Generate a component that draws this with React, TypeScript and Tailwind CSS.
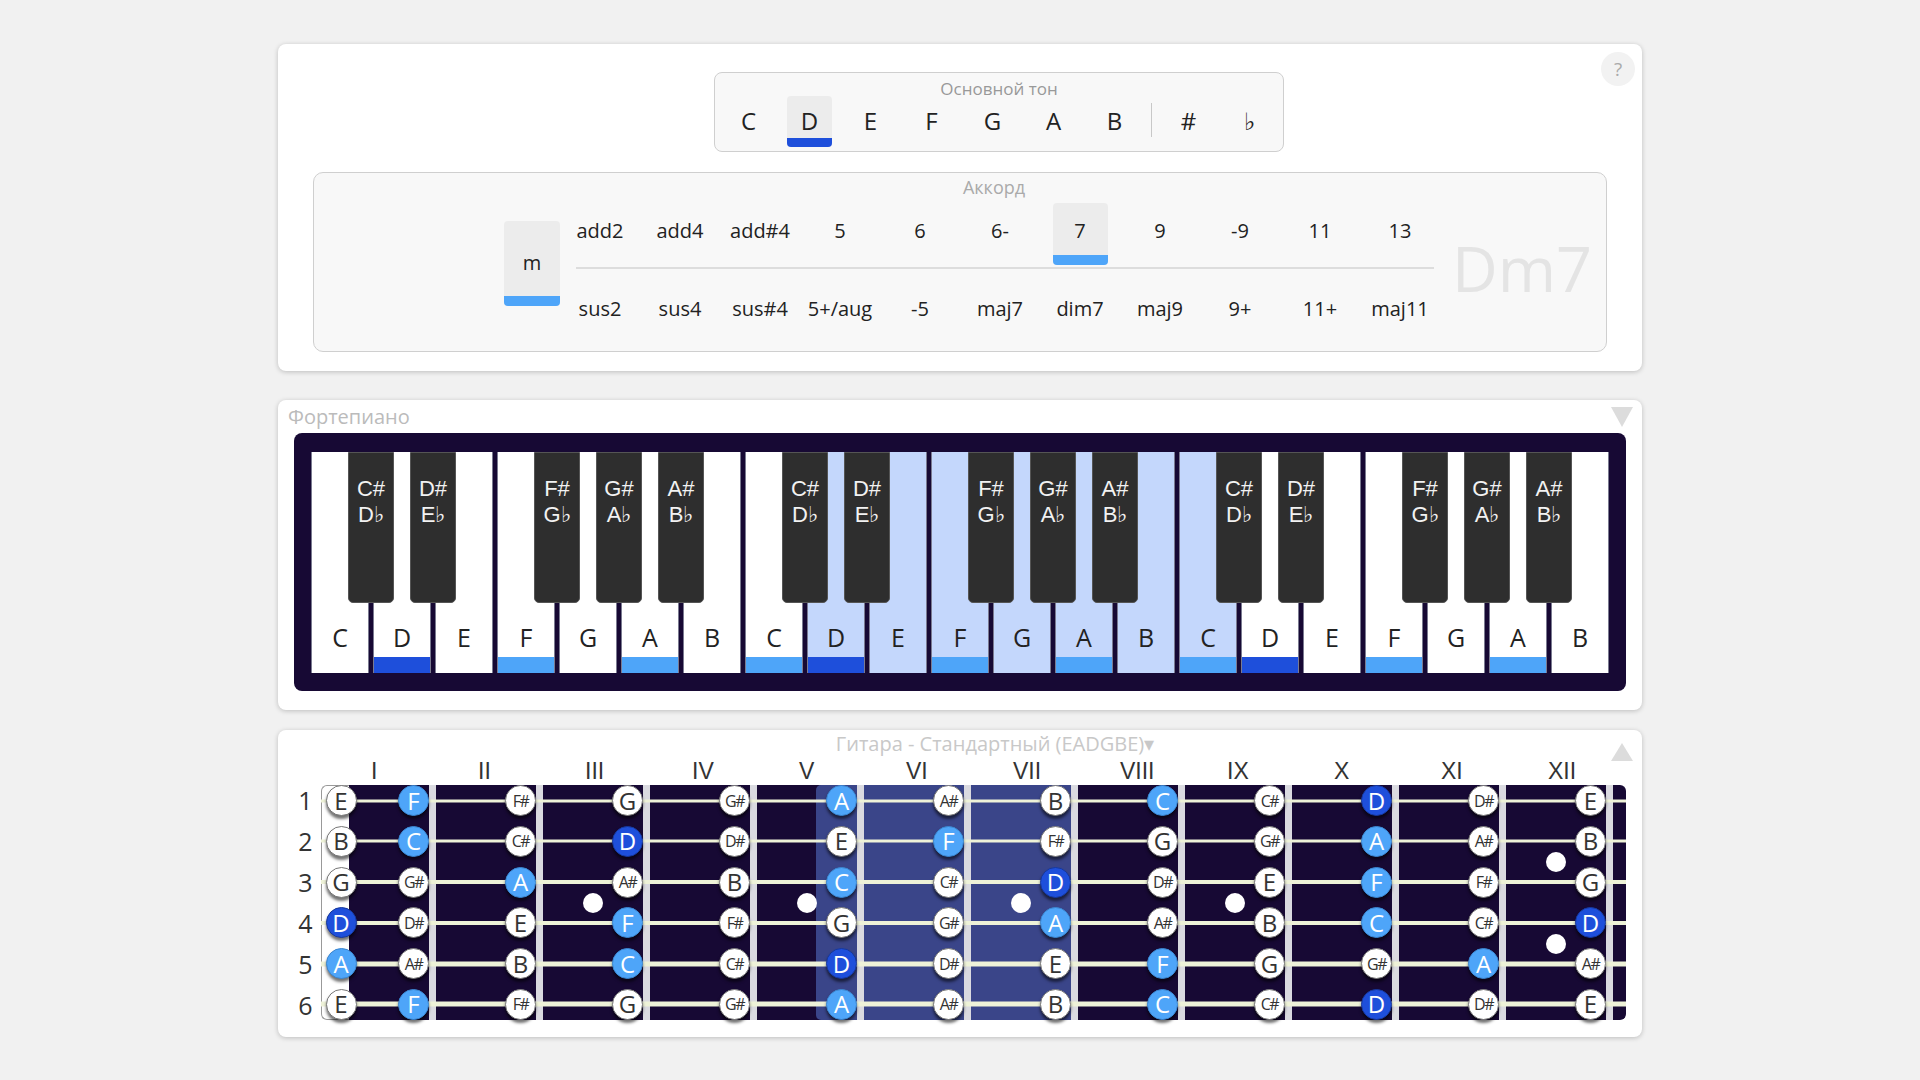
import React from 'react';

const ROOTS = ['C', 'D', 'E', 'F', 'G', 'A', 'B'];
const TOP_ROW = ['add2', 'add4', 'add#4', '5', '6', '6-', '7', '9', '-9', '11', '13'];
const BOTTOM_ROW = ['sus2', 'sus4', 'sus#4', '5+/aug', '-5', 'maj7', 'dim7', 'maj9', '9+', '11+', 'maj11'];

const WHITE_KEYS = [...ROOTS, ...ROOTS, ...ROOTS];
const KEY_BARS: Record<number, 'dark' | 'light'> = {
  1: 'dark', 3: 'light', 5: 'light',
  7: 'light', 8: 'dark', 10: 'light', 12: 'light',
  14: 'light', 15: 'dark', 17: 'light', 19: 'light',
};
const BLACK_KEYS: { after: number; top: string; bottom: string }[] = [];
[0, 1, 2].forEach((o) => {
  [
    [0, 'C#', 'D♭'],
    [1, 'D#', 'E♭'],
    [3, 'F#', 'G♭'],
    [4, 'G#', 'A♭'],
    [5, 'A#', 'B♭'],
  ].forEach(([i, t, b]) => BLACK_KEYS.push({ after: o * 7 + (i as number), top: t as string, bottom: b as string }));
});

const FRETS = ['I', 'II', 'III', 'IV', 'V', 'VI', 'VII', 'VIII', 'IX', 'X', 'XI', 'XII'];
const STRINGS = [
  ['E', 'F', 'F#', 'G', 'G#', 'A', 'A#', 'B', 'C', 'C#', 'D', 'D#', 'E'],
  ['B', 'C', 'C#', 'D', 'D#', 'E', 'F', 'F#', 'G', 'G#', 'A', 'A#', 'B'],
  ['G', 'G#', 'A', 'A#', 'B', 'C', 'C#', 'D', 'D#', 'E', 'F', 'F#', 'G'],
  ['D', 'D#', 'E', 'F', 'F#', 'G', 'G#', 'A', 'A#', 'B', 'C', 'C#', 'D'],
  ['A', 'A#', 'B', 'C', 'C#', 'D', 'D#', 'E', 'F', 'G', 'G#', 'A', 'A#'],
  ['E', 'F', 'F#', 'G', 'G#', 'A', 'A#', 'B', 'C', 'C#', 'D', 'D#', 'E'],
];
const STRING_H = ['h-[3px]', 'h-[3px]', 'h-[4px]', 'h-[4px]', 'h-[5px]', 'h-[5px]'];

function Note({ n }: { n: string }) {
  const root = n === 'D';
  const chord = n === 'F' || n === 'A' || n === 'C';
  const sharp = n.includes('#');
  const color = root
    ? 'bg-[#1e4fdb] text-white border-[#17389c]'
    : chord
      ? 'bg-[#4ea5f9] text-white border-[#3b86d0]'
      : 'bg-white text-[#333] border-[#777]';
  return (
    <div
      className={`w-[31px] h-[31px] rounded-full border flex items-center justify-center shadow-[0_3px_3px_rgba(0,0,0,0.55)] ${color}`}
    >
      <span className={sharp ? 'text-[16px] leading-none tracking-[-1.5px]' : 'text-[24px] leading-none'}>{n}</span>
    </div>
  );
}

function Triangle({ up }: { up?: boolean }) {
  return (
    <svg width="22" height="20" viewBox="0 0 22 20">
      <polygon points={up ? '11,0 22,18 0,18' : '0,0 22,0 11,20'} fill="#dcdcdc" />
    </svg>
  );
}

export default function App() {
  return (
    <div className="min-h-screen bg-[#f1f1f1] pt-[44px] pb-[43px] font-['Open_Sans',sans-serif] text-[#222]">
      {/* chord picker */}
      <div className="relative mx-auto w-[1364px] bg-white rounded-[8px] shadow-[0_1px_5px_rgba(0,0,0,0.22)] pt-[28px] pb-[19px] px-[35px]">
        <button className="absolute top-[8px] right-[7px] w-[34px] h-[34px] rounded-full bg-[#f2f2f2] text-[#aaa] text-[19px] leading-none flex items-center justify-center">
          ?
        </button>

        <div className="ml-[401px] w-[570px] h-[80px] border border-[#cfcfcf] rounded-[8px] bg-[#f8f8f8] flex flex-col items-center">
          <div className="pt-[7px] text-[17px] leading-[18px] text-[#999]">Основной тон</div>
          <div className="mt-[-2px] flex items-start">
            {ROOTS.map((r) => (
              <div
                key={r}
                className={`w-[45px] h-[51px] mr-[16px] last:mr-0 flex flex-col items-center rounded-[4px] overflow-hidden ${r === 'D' ? 'bg-[#ececec]' : ''}`}
              >
                <span className="mt-[10px] text-[24px] leading-[30px]">{r}</span>
                <span className="flex-1" />
                <span className={`w-full h-[9px] ${r === 'D' ? 'bg-[#1e4fdb]' : ''}`} />
              </div>
            ))}
            <div className="ml-[-2px] mr-[14px] mt-[7px] w-px h-[34px] bg-[#c8c8c8]" />
            {['#', '♭'].map((r) => (
              <div key={r} className="w-[45px] h-[51px] mr-[16px] last:mr-0 flex flex-col items-center">
                <span className="mt-[10px] text-[24px] leading-[30px]">{r}</span>
              </div>
            ))}
          </div>
        </div>

        <div className="mt-[20px] h-[180px] border border-[#cfcfcf] rounded-[10px] bg-[#f8f8f8]">
          <div className="pt-[5px] pl-[68px] text-center text-[18px] leading-[18px] text-[#aaa]">Аккорд</div>
          <div className="mt-[7px] ml-[190px] flex items-start">
            <div className="mt-[18px] w-[56px] h-[85px] rounded-[4px] overflow-hidden bg-[#ececec] flex flex-col items-center">
              <span className="mt-[28px] text-[20px] leading-[28px]">m</span>
              <span className="flex-1" />
              <span className="w-full h-[10px] bg-[#4ea5f9]" />
            </div>
            <div className="w-[880px] shrink-0">
              <div className="flex h-[62px]">
                {TOP_ROW.map((c) => (
                  <div key={c} className="w-[80px] shrink-0 flex justify-center">
                    <div
                      className={`w-[55px] h-[62px] rounded-[4px] flex flex-col items-center ${c === '7' ? 'bg-[#ececec]' : ''}`}
                    >
                      <span className="mt-[14px] text-[20px] leading-[28px] whitespace-nowrap">{c}</span>
                      <span className="flex-1" />
                      <span className={`w-full h-[10px] rounded-b-[4px] ${c === '7' ? 'bg-[#4ea5f9]' : ''}`} />
                    </div>
                  </div>
                ))}
              </div>
              <div className="mt-[2px] ml-[16px] w-[858px] h-[2px] bg-[#dddddd]" />
              <div className="mt-[2px] flex h-[62px]">
                {BOTTOM_ROW.map((c) => (
                  <div key={c} className="w-[80px] shrink-0 flex justify-center">
                    <span className="mt-[24px] text-[20px] leading-[28px] whitespace-nowrap">{c}</span>
                  </div>
                ))}
              </div>
            </div>
            <div className="ml-[12px] mt-[33px] text-[63px] leading-[64px] text-[#e4e4e4]">Dm7</div>
          </div>
        </div>
      </div>

      {/* piano */}
      <div className="relative mx-auto mt-[29px] w-[1364px] bg-white rounded-[8px] shadow-[0_1px_5px_rgba(0,0,0,0.22)] pt-[4px] pb-[19px] px-[16px]">
        <div className="absolute top-[7px] right-[9px]">
          <Triangle />
        </div>
        <div className="ml-[-6px] text-[20px] leading-[26px] text-[#bbb]">Фортепиано</div>
        <div className="mt-[3px] w-[1332px] h-[258px] bg-[#170934] rounded-[8px] pl-[17px] pt-[19px]">
          <div className="relative w-[1298px] h-[221px] flex gap-[4px]">
            {WHITE_KEYS.map((k, i) => {
              const bar = KEY_BARS[i];
              const lit = i >= 8 && i <= 14;
              return (
                <div
                  key={i}
                  className={`w-[58px] shrink-0 h-[221px] flex flex-col items-center justify-end border-x border-[#7a7a90] ${lit ? 'bg-[#c4d7fc]' : 'bg-white'}`}
                >
                  <span className="text-[25px] leading-[30px] text-[#222]">{k}</span>
                  <span className="h-[5px]" />
                  <span
                    className={`w-full h-[16px] ${bar === 'dark' ? 'bg-[#1e4fdb]' : bar === 'light' ? 'bg-[#4ea5f9]' : ''}`}
                  />
                </div>
              );
            })}
            {BLACK_KEYS.map((b) => (
              <div
                key={b.after}
                className="absolute top-0 w-[46px] h-[151px] bg-[#2e2e2e] border border-[#555] rounded-b-[5px] pt-[23px] flex flex-col items-center text-[#f2f2f2] font-['Liberation_Sans',sans-serif] text-[22px] leading-[26px]"
                style={{ left: b.after * 62 + 37 }}
              >
                <span>{b.top}</span>
                <span>{b.bottom}</span>
              </div>
            ))}
          </div>
        </div>
      </div>

      {/* guitar */}
      <div className="relative mx-auto mt-[20px] w-[1364px] bg-white rounded-[8px] shadow-[0_1px_5px_rgba(0,0,0,0.22)] pt-[2px] pb-[17px] px-[16px]">
        <div className="absolute top-[13px] right-[9px]">
          <Triangle up />
        </div>
        <div className="flex justify-center pl-[70px] text-[20px] leading-[24px] text-[#c8c8c8]">
          Гитара - Стандартный (EADGBE)▾
        </div>
        <div className="mt-[2px] flex font-['Liberation_Sans',sans-serif] text-[23px] leading-[26px] text-[#333]">
          <div className="w-[77px] shrink-0" />
          {FRETS.map((f) => (
            <div key={f} className="w-[107px] shrink-0">
              {f}
            </div>
          ))}
        </div>
        <div className="mt-[1px] flex">
          <div className="w-[27px] shrink-0 h-[235px] flex flex-col justify-between pr-[4px] text-[25px] text-[#333]">
            {[1, 2, 3, 4, 5, 6].map((s) => (
              <div key={s} className="h-[30px] leading-[30px] text-center">
                {s}
              </div>
            ))}
          </div>
          <div className="relative w-[1305px] shrink-0 h-[235px]">
            <div className="flex h-full">
              <div className="w-[28px] shrink-0 bg-white border-l border-y border-[#999] rounded-l-[6px]" />
              <div className="w-[80px] shrink-0 bg-[#170934]" />
              {Array.from({ length: 11 }).map((_, k) => {
                const fret = k + 2;
                return (
                  <React.Fragment key={fret}>
                    <div className="w-[7px] shrink-0 bg-[#dadae0]" />
                    <div
                      className={`w-[100px] shrink-0 flex flex-col items-center justify-center gap-[62px] ${fret === 6 || fret === 7 ? 'bg-[#3a4589]' : 'bg-[#170934]'} ${fret === 5 ? 'relative' : ''}`}
                    >
                      {fret === 5 && (
                        <div className="absolute right-0 top-0 bottom-0 w-[41px] bg-[#3a4589] rounded-l-[5px]" />
                      )}
                      {[3, 5, 7, 9].includes(fret) && <span className="relative w-[20px] h-[20px] rounded-full bg-white" />}
                      {fret === 12 && (
                        <>
                          <span className="w-[20px] h-[20px] rounded-full bg-white" />
                          <span className="w-[20px] h-[20px] rounded-full bg-white" />
                        </>
                      )}
                    </div>
                  </React.Fragment>
                );
              })}
              <div className="w-[7px] shrink-0 bg-[#dadae0]" />
              <div className="w-[13px] shrink-0 bg-[#170934] rounded-r-[6px]" />
            </div>

            <div className="absolute inset-0 flex flex-col justify-between">
              {STRINGS.map((row, s) => (
                <div key={s} className="relative h-[31px] flex items-center">
                  <div className={`absolute left-0 right-0 top-1/2 -translate-y-1/2 bg-[#eef2d8] ${STRING_H[s]}`} />
                  <div className="relative w-[40px] shrink-0 flex justify-center">
                    <Note n={row[0]} />
                  </div>
                  {row.slice(1).map((n, i) => (
                    <div key={i} className="relative w-[107px] shrink-0 pl-[37px]">
                      <Note n={n} />
                    </div>
                  ))}
                </div>
              ))}
            </div>
          </div>
        </div>
      </div>
    </div>
  );
}
